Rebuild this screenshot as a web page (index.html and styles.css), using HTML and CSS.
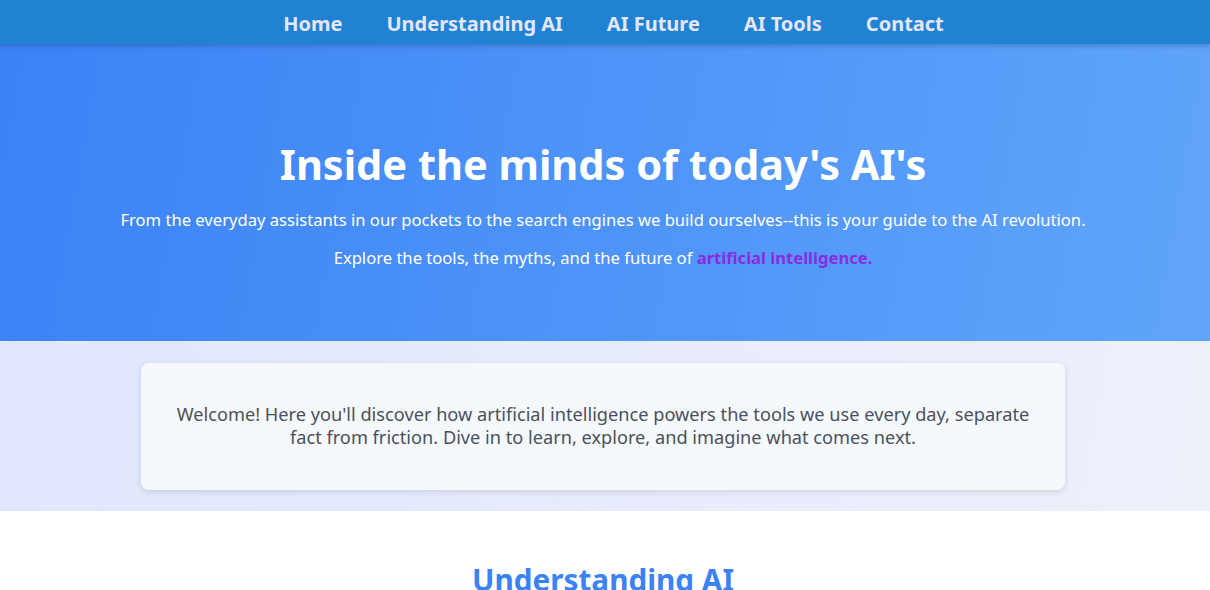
FILE: index.html
```html
<!DOCTYPE html>
<html lang="en">
<head>
<meta charset="utf-8">
<title>Inside the minds of today's AI's</title>
<link rel="stylesheet" href="styles.css">
</head>
<body>
<nav class="topnav">
  <a href="#">Home</a>
  <a href="#">Understanding AI</a>
  <a href="#">AI Future</a>
  <a href="#">AI Tools</a>
  <a href="#">Contact</a>
</nav>
<header class="hero">
  <h1>Inside the minds of today's AI's</h1>
  <p>From the everyday assistants in our pockets to the search engines we build ourselves--this is your guide to the AI revolution.</p>
  <p>Explore the tools, the myths, and the future of <strong class="accent">artificial intelligence.</strong></p>
</header>
<section class="intro">
  <div class="card">
    <p>Welcome! Here you'll discover how artificial intelligence powers the tools we use every day, separate fact from friction. Dive in to learn, explore, and imagine what comes next.</p>
  </div>
</section>
<section class="content">
  <h2>Understanding AI</h2>
</section>
</body>
</html>
```
FILE: styles.css
```css
* { box-sizing: border-box; }
body {
  margin: 0;
  font-family: "Segoe UI", "Noto Sans", "Open Sans", sans-serif;
  background: #ffffff;
}
.topnav {
  position: relative;
  z-index: 2;
  height: 44px;
  padding: 2px 0 0 17px;
  background: #1f82d2;
  display: flex;
  justify-content: center;
  align-items: center;
  gap: 44px;
  box-shadow: 0 2px 5px rgba(0, 0, 0, 0.2);
}
.topnav a {
  color: #e6e6fa;
  text-decoration: none;
  font-weight: 700;
  font-size: 20px;
}
.hero {
  height: 297px;
  background: linear-gradient(100deg, #3b82f6, #60a5fa);
  color: #ffffff;
  text-align: center;
  padding: 95px 4px 0 0;
}
.hero h1 {
  margin: 0 0 19px;
  font-size: 41.5px;
  font-weight: 700;
  line-height: 50px;
}
.hero p {
  margin: 0 0 14px;
  font-size: 16.6px;
  line-height: 24px;
}
.accent { color: #8a2be2; }
.intro {
  background: linear-gradient(100deg, #e0e7ff, #eef0fa);
  padding: 22px 4px 21px 0;
}
.card {
  width: 924px;
  margin: 0 auto;
  background: #f6f9fc;
  border-radius: 8px;
  box-shadow: 0 2px 6px rgba(0, 0, 0, 0.12);
  padding: 40px 32px 41px;
  text-align: center;
}
.card p {
  margin: 0;
  font-size: 18.2px;
  line-height: 23px;
  color: #4a505c;
}
.content {
  padding: 48px 4px 0 0;
  text-align: center;
}
.content h2 {
  margin: 0;
  color: #3b82f6;
  font-size: 29.7px;
  font-weight: 700;
}
```
